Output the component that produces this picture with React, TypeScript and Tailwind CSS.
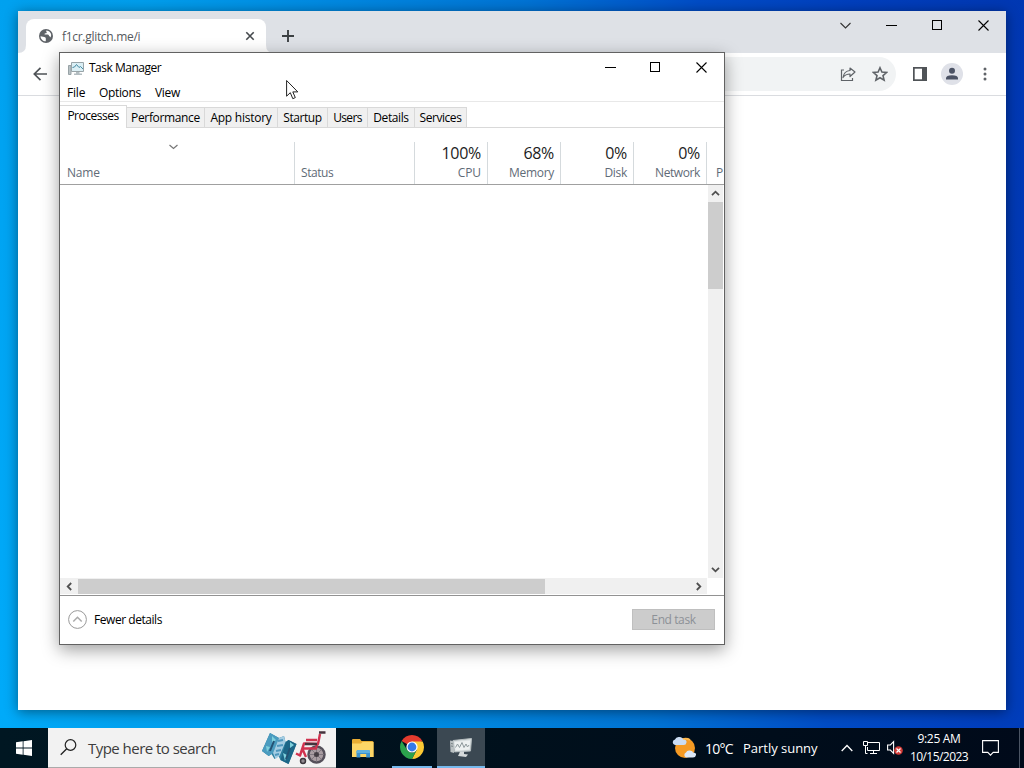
import type { ReactNode } from "react";

// --- Data ---
const tabs = [
  { name: "Performance", width: "w-[78px]", tracking: "tracking-[-0.35px]" },
  { name: "App history", width: "w-[73px]", tracking: "tracking-[-0.25px]" },
  { name: "Startup", width: "w-[50px]", tracking: "tracking-[-0.45px]" },
  { name: "Users", width: "w-[40px]", tracking: "tracking-[-0.65px]" },
  { name: "Details", width: "w-[47px]", tracking: "tracking-[-0.4px]" },
  { name: "Services", width: "w-[52px]", tracking: "tracking-[-0.45px]" },
];

const usage = [
  { name: "CPU", value: "100%", tracking: "tracking-[-0.1px]" },
  { name: "Memory", value: "68%", tracking: "tracking-[-0.3px]" },
  { name: "Disk", value: "0%", tracking: "tracking-[-0.3px]" },
  { name: "Network", value: "0%", tracking: "tracking-[-0.4px]" },
];

// --- Window buttons ---
const MinimizeIcon = () => (
  <svg width="11" height="11" viewBox="0 0 11 11" shapeRendering="crispEdges">
    <path d="M0 5.5h10.500" stroke="#000" />
  </svg>
);

const MaximizeIcon = () => (
  <svg width="11" height="11" viewBox="0 0 11 11" shapeRendering="crispEdges">
    <path d="M.5.5h9v9h-9z" fill="none" stroke="#000" />
  </svg>
);

const CloseIcon = () => (
  <svg width="11" height="11" viewBox="0 0 11 11">
    <path d="M.5.5l10 10M10.500.5l-10 10" stroke="#000" strokeWidth="1.1" />
  </svg>
);

const Chevron = ({ className }: { className?: string }) => (
  <svg width="9" height="9" viewBox="0 0 9 9" className={className}>
    <path d="M1 6.200L4.500 2.700 8 6.200" fill="none" stroke="#505050" strokeWidth="1.8" />
  </svg>
);

// --- Drawings ---
const GlobeIcon = () => (
  <svg width="14" height="14" viewBox="0 0 14 14">
    <circle cx="7" cy="7" r="7" fill="#5f6368" />
    <path
      d="M1.500 7.200l3.800.7c1 .2 1.500.8 1.500 1.700v2.700C3.900 12.200 1.600 10 1.500 7.200zM7.400 1.600c-.4.7-.2 1.300.4 1.700-.1.900-.8 1.100-1.700 1.100-.6 0-.7.7-.4 1.200h3c1 0 1.300.9 1.300 1.700 1 0 1.600.5 1.400 1.500C13 6 12 3.500 9.800 2.200 9 1.800 8.200 1.600 7.400 1.600z"
      fill="#fff"
    />
  </svg>
);

const TaskManagerIcon = () => (
  <svg width="17" height="15" viewBox="0 0 17 15">
    <path d="M.5 4.500h2.500v9H.5z" fill="#b9c2c5" stroke="#98a3a7" />
    <path d="M3.500 1.500h12v9h-12z" fill="#dbeff5" stroke="#99a4a8" />
    <path d="M4.500 6.500l2-.5 2-2.500 2.500 3 1.500-1 2.500 2.500" fill="none" stroke="#478ba3" />
    <path d="M8 11h3.500v1.500H14V14H6v-1.500h2z" fill="#b3bdc1" />
  </svg>
);

const TaskManagerTaskbarIcon = () => (
  <svg width="24" height="22" viewBox="0 0 24 22">
    <path d="M1 4.500l4 .8V17l-3.500-.9z" fill="#b9c0c2" />
    <path d="M2 7.500l2.500.4M2 10l2.500.4" stroke="#798487" />
    <path d="M4 4.500L22.500 2.500 21.500 15l-16 .9z" fill="#d9dfe0" stroke="#b4bcbe" />
    <path d="M5.500 6l15.500-1.500-.5 9-14 1z" fill="#edf1f1" />
    <path d="M6.500 11.500l2-3.500 2 3.500 2.500-5 2 5 2-3.500 1.500 3 1.500-2" fill="none" stroke="#8e999c" />
    <path d="M11 15.500h4V18l4 .5-2 2.500-8-1 1-2z" fill="#d5dadb" />
  </svg>
);

const ChromeIcon = () => (
  <svg width="24" height="24" viewBox="0 0 24 24">
    <path d="M12 12L1.610 6A12 12 0 0 1 22.390 6z" fill="#e33b2e" />
    <path d="M12 6.500h10.650A12 12 0 0 1 12 24l4.800-9.200z" fill="#fcc934" />
    <path d="M1.610 6l5.600 9A5.500 5.500 0 0 0 16.800 14.700L12 24A12 12 0 0 1 1.610 6z" fill="#2ba24c" />
    <circle cx="12" cy="12" r="5.600" fill="#fff" />
    <circle cx="12" cy="12" r="4.400" fill="#3579e8" />
  </svg>
);

const FolderIcon = () => (
  <svg width="22" height="19" viewBox="0 0 22 19">
    <path d="M0 1.200Q0 0 1 0h7l1.500 2H20q1.500 0 1.500 1.200V18H0z" fill="#e9ad33" />
    <path d="M0 4.500h9L10.500 3H21.500v15H0z" fill="#fdd667" />
    <path d="M4.500 18.500v-6Q4.500 11 6 11h10.500Q18 11 18 12.500v6h-3.800V15H8.300v3.500z" fill="#3d93cf" />
    <path d="M4.500 12.500Q4.500 11 6 11h10.500Q18 11 18 12.500V14H4.500z" fill="#60b0df" />
  </svg>
);

const SearchArt = () => (
  <svg width="66" height="36" viewBox="0 0 66 36">
    <path d="M8 3l9 5 5-2 1.500 6 3-2 8 4-8 20-8-4-2-4-4 3-3-5-3 2-6.500-5z" fill="#2d7f9f" />
    <path d="M8 3l9 5-6 15-4 3-7-5z" fill="#4b9cc0" />
    <path d="M17 8l5-2 1.500 6-6 14-4 3-2.500-6z" fill="#a5cde3" />
    <path d="M24 12l2.500-2 8 4-8 20-8-4z" fill="#1c6687" />
    <path d="M10 6l4 4-4 3zM4 16l4 1-3 5zM28 12l4 3-4 3zM21 23l4 2-2 6z" fill="#7fd0dc" />
    <path d="M12 11L8 21M28 18l-4 11" stroke="#245273" strokeWidth="2" />
    <path d="M16 11l5-1M15 16l6-1M14 21l5-1M13 25l4-1" stroke="#4f97bd" strokeWidth="2" />
    <circle cx="54.500" cy="24.500" r="8" fill="#a99da2" stroke="#55505a" strokeWidth="2.500" />
    <path d="M54.500 17v15M47 24.500h15M49.200 19.200l10.600 10.600M59.800 19.200L49.200 29.800" stroke="#777078" strokeWidth=".8" />
    <circle cx="54.500" cy="24.500" r="2.500" fill="#443e44" />
    <path d="M58 4l-2 10-14-.5-4 12-4-2M55 14l-1 4.500H41M44 10h11M40 18l4 9" fill="none" stroke="#d0334f" strokeWidth="2.400" strokeLinejoin="round" />
    <path d="M57 2.500h6.500M43 14h12" stroke="#45333d" strokeWidth="2.500" />
    <circle cx="41" cy="31" r="2.500" fill="#918b91" stroke="#3d383e" strokeWidth="1.500" />
  </svg>
);

const WeatherIcon = () => (
  <svg width="26" height="24" viewBox="0 0 26 24">
    <circle cx="13" cy="12" r="10" fill="#f59a23" />
    <path d="M5 9a9 9 0 0 1 13-5" fill="none" stroke="#ffb94d" strokeWidth="2" />
    <path d="M3 9a2.800 2.800 0 0 1 0-5.500Q4 .5 7.500 1T11 3.500q4 0 3.500 3T11 9z" fill="#cbdcf2" />
    <path d="M14 21.500a2.700 2.700 0 0 1 0-5q1-2.500 4-2t3 2q3.500 0 3 2.500t-3 2.500z" fill="#dce8f8" />
  </svg>
);

const Cursor = () => (
  <svg width="13" height="21" viewBox="0 0 13 21" className="absolute left-[286px] top-[79px]">
    <path d="M.6 1.500v15.700l3.700-3.500 2.500 6 2.500-1.100-2.500-5.700h5z" fill="#fff" stroke="#222" />
  </svg>
);

const IconCell = ({ children, className }: { children: ReactNode; className: string }) => (
  <div className={`flex shrink-0 items-center justify-center ${className}`}>{children}</div>
);

// --- Browser window ---
const BrowserWindow = () => (
  <div className="absolute left-[18px] top-[11px] flex h-[699px] w-[988px] flex-col bg-white shadow-[0_2px_12px_rgba(0,0,0,0.45)]">
    <div className="flex h-[42px] shrink-0 items-end bg-[#dee1e6]">
      <svg width="8" height="8" viewBox="0 0 8 8" className="shrink-0">
        <path d="M0 8h8V0q0 8-8 8z" fill="#fff" />
      </svg>
      <div className="flex h-[34px] w-[240px] shrink-0 items-center rounded-t-lg bg-white pl-[13px] pr-[11px] text-[12px] text-[#55595d]">
        <GlobeIcon />
        <span className="ml-[9px] flex-1 pt-px tracking-[-0.3px]">f1cr.glitch.me/i</span>
        <svg width="10" height="10" viewBox="0 0 10 10">
          <path d="M1.300 1.300l7.400 7.400M8.700 1.300L1.300 8.700" stroke="#45494d" strokeWidth="1.600" />
        </svg>
      </div>
      <svg width="8" height="8" viewBox="0 0 8 8" className="shrink-0">
        <path d="M8 8H0V0q0 8 8 8z" fill="#fff" />
      </svg>
      <svg width="12" height="12" viewBox="0 0 12 12" className="mb-[11px] ml-2">
        <path d="M6 0v12M0 6h12" stroke="#3c4043" strokeWidth="1.900" />
      </svg>
      <div className="ml-auto flex h-[42px] items-start pt-[9px]">
        <IconCell className="h-[11px] w-[46px]">
          <svg width="11" height="11" viewBox="0 0 11 11">
            <path d="M.5 3L5.500 8l5-5" fill="none" stroke="#333" strokeWidth="1.100" />
          </svg>
        </IconCell>
        <IconCell className="h-[11px] w-[46px] pl-px"><MinimizeIcon /></IconCell>
        <IconCell className="h-[11px] w-[46px] pl-px"><MaximizeIcon /></IconCell>
        <IconCell className="h-[11px] w-[46px] pl-px"><CloseIcon /></IconCell>
      </div>
    </div>

    <div className="flex h-[43px] shrink-0 items-center border-b border-[#dadce0] pl-[15px] pr-[19px]">
      <svg width="14" height="14" viewBox="0 0 14 14">
        <path d="M14 7H1.500M7.500.8L1.300 7l6.200 6.200" fill="none" stroke="#4f5357" strokeWidth="1.700" />
      </svg>
      <div className="ml-4 flex h-[34px] flex-1 items-center justify-end gap-4 rounded-full bg-[#f1f3f4] pr-2">
        <svg width="16" height="16" viewBox="0 0 16 16" fill="none" stroke="#5f6368" strokeWidth="1.200">
          <path d="M4 4H1.500v10.500h11V12" />
          <path d="M10 2l5 4-5 4.500V8q-4.500 0-7 3.500Q4 5 10 4.500z" strokeLinejoin="round" />
        </svg>
        <svg width="16" height="16" viewBox="0 0 16 16">
          <path d="M8 1.800l1.900 4.300 4.700.4-3.600 3.100 1.100 4.600L8 11.800l-4.100 2.400L5 9.600 1.400 6.500l4.700-.4z" fill="none" stroke="#5f6368" strokeWidth="1.600" />
        </svg>
      </div>
      <svg width="14" height="14" viewBox="0 0 14 14" className="ml-[17px]">
        <path d="M0 0h14v14H0z" fill="#4f5357" />
        <path d="M1.700 1.700H9v10.600H1.700z" fill="#fff" />
      </svg>
      <svg width="22" height="22" viewBox="0 0 22 22" className="ml-[14px]">
        <circle cx="11" cy="11" r="11" fill="#dfe1e8" />
        <circle cx="11" cy="7.800" r="3" fill="#4b5264" />
        <path d="M5 16.500v-1.300q0-3 6-3t6 3v1.300z" fill="#4b5264" />
      </svg>
      <svg width="4" height="14" viewBox="0 0 4 14" className="ml-5">
        <circle cx="2" cy="2" r="1.500" fill="#5f6368" />
        <circle cx="2" cy="7" r="1.500" fill="#5f6368" />
        <circle cx="2" cy="12" r="1.500" fill="#5f6368" />
      </svg>
    </div>
  </div>
);

// --- Task Manager window ---
const TaskManagerWindow = () => (
  <div className="absolute left-[59px] top-[52px] flex h-[593px] w-[666px] flex-col border border-[#626262] bg-white text-[12px] text-black shadow-[0_5px_16px_rgba(0,0,0,0.38)]">
    <div className="flex h-[30px] shrink-0 items-center pl-2">
      <TaskManagerIcon />
      <span className="ml-1 flex-1 tracking-[-0.5px]">Task Manager</span>
      <div className="flex items-center pb-px">
        <IconCell className="w-[45px]"><MinimizeIcon /></IconCell>
        <IconCell className="w-[45px]"><MaximizeIcon /></IconCell>
        <IconCell className="w-[46px] pl-px"><CloseIcon /></IconCell>
      </div>
    </div>

    <div className="flex h-[19px] shrink-0 items-end border-b border-[#e8e8e8] pl-[7px] leading-[16px]">
      <span className="w-8 tracking-[-0.2px]">File</span>
      <span className="w-14 tracking-[-0.35px]">Options</span>
      <span className="tracking-[-0.3px]">View</span>
    </div>

    <div className="flex h-[26px] shrink-0 items-end">
      <div className="flex h-[23px] w-[67px] justify-center border-r border-t border-[#d9d9d9] pt-px">
        <span className="tracking-[-0.5px]">Processes</span>
      </div>
      {tabs.map((tab) => (
        <div
          key={tab.name}
          className={`flex h-[21px] items-center justify-center border-b border-r border-t border-[#d9d9d9] bg-[#f0f0f0] pt-px ${tab.width}`}
        >
          <span className={`whitespace-nowrap ${tab.tracking}`}>{tab.name}</span>
        </div>
      ))}
      <div className="flex-1 self-stretch border-b border-[#d9d9d9]" />
    </div>

    <div className="flex h-[57px] shrink-0 items-end overflow-hidden border-b border-[#a0a0a0] text-[#5f6b77]">
      <div className="flex h-[42px] w-[235px] shrink-0 flex-col justify-between border-r border-[#d5dadd] pb-[2px] pl-[7px]">
        <svg width="9" height="6" viewBox="0 0 9 6" className="ml-[102px] mt-[2px]">
          <path d="M.5 1l4 3.500 4-3.500" fill="none" stroke="#777" strokeWidth="1.200" />
        </svg>
        <span className="tracking-[-0.2px]">Name</span>
      </div>
      <div className="flex h-[42px] w-[120px] shrink-0 items-end border-r border-[#d5dadd] pb-[2px] pl-[6px]">
        <span className="tracking-[-0.45px]">Status</span>
      </div>
      {usage.map((col) => (
        <div
          key={col.name}
          className="flex h-[42px] w-[73px] shrink-0 flex-col items-end justify-end border-r border-[#d5dadd] pb-[2px] pr-[6px]"
        >
          <span className="text-[16px] leading-[22px] tracking-[-0.3px] text-[#1c1c1c]">{col.value}</span>
          <span className={`leading-[18px] ${col.tracking}`}>{col.name}</span>
        </div>
      ))}
      <span className="pb-[2px] pl-[9px]">P</span>
    </div>

    <div className="flex flex-1">
      <div className="flex flex-1 flex-col justify-end">
        <div className="mb-px flex h-[16px] w-full items-center bg-[#f0f0f0]">
          <IconCell className="w-[18px]"><Chevron className="-rotate-90" /></IconCell>
          <div className="h-[15px] w-[467px] bg-[#cdcdcd]" />
          <IconCell className="ml-auto w-[17px]"><Chevron className="rotate-90" /></IconCell>
        </div>
      </div>
      <div className="mb-[17px] ml-px mr-px flex w-[15px] flex-col items-center bg-[#f0f0f0]">
        <IconCell className="h-[17px]"><Chevron /></IconCell>
        <div className="h-[87px] w-full bg-[#cdcdcd]" />
        <IconCell className="mt-auto h-[17px]"><Chevron className="rotate-180" /></IconCell>
      </div>
    </div>

    <div className="flex h-[49px] shrink-0 items-center border-t border-[#929292] pb-px pl-2 pr-[9px]">
      <svg width="19" height="19" viewBox="0 0 19 19">
        <circle cx="9.500" cy="9.500" r="8.900" fill="none" stroke="#999" />
        <path d="M5.300 11.500l4.200-4.300 4.200 4.300" fill="none" stroke="#aaa" strokeWidth="1.500" />
      </svg>
      <span className="ml-[7px] pt-px tracking-[-0.45px]">Fewer details</span>
      <button className="ml-auto h-[21px] w-[83px] border border-[#bfbfbf] bg-[#cccccc] tracking-[-0.4px] text-[#8c9197]">
        End task
      </button>
    </div>
  </div>
);

// --- Taskbar ---
const Taskbar = () => (
  <div className="absolute bottom-0 left-0 flex h-10 w-full items-center bg-gradient-to-r from-[#001722] via-[#00101c] to-[#000a1a] text-white">
    <IconCell className="h-10 w-12">
      <svg width="16" height="16" viewBox="0 0 16 16" fill="#fff">
        <path d="M0 2.200L6.700 1.300v6.200H0zM7.500 1.200L16 0v7.500H7.500zM0 8.400h6.700v6.300L0 13.800zM7.500 8.400H16V16l-8.500-1.200z" />
      </svg>
    </IconCell>
    <div className="flex h-10 w-[288px] shrink-0 items-center border-b border-[#aaa] bg-[#f2f2f2] pl-3 pr-2 text-[#3d3d3d]">
      <svg width="17" height="17" viewBox="0 0 17 17">
        <circle cx="10.500" cy="6" r="5.300" fill="none" stroke="#222" strokeWidth="1.200" />
        <path d="M6.700 9.800L.7 15.800" stroke="#222" strokeWidth="1.300" />
      </svg>
      <span className="ml-[11px] flex-1 whitespace-nowrap pt-[2px] text-[15px] tracking-[-0.53px]">Type here to search</span>
      <SearchArt />
    </div>
    <IconCell className="ml-[2px] h-10 w-[50px]"><FolderIcon /></IconCell>
    <IconCell className="ml-1 h-10 w-10 border-b-2 border-[#76b9ed]"><ChromeIcon /></IconCell>
    <IconCell className="ml-[5px] h-10 w-12 border-b-2 border-[#76b9ed] bg-[#3b4852]"><TaskManagerTaskbarIcon /></IconCell>

    <div className="ml-auto flex h-full items-center">
      <WeatherIcon />
      <span className="ml-[7px] w-[38px] whitespace-nowrap pt-px text-[14px] tracking-[-0.75px]">10°C</span>
      <span className="w-[98px] whitespace-nowrap pt-px text-[13px] tracking-[-0.02px]">Partly sunny</span>
      <svg width="12" height="8" viewBox="0 0 12 8">
        <path d="M.7 7L6 1.500 11.300 7" fill="none" stroke="#fff" strokeWidth="1.300" />
      </svg>
      <svg width="17" height="14" viewBox="0 0 17 14" fill="none" stroke="#fff" className="ml-[10px]">
        <path d="M5 1.500h11.500v8H4.500V6M10.500 9.500v3M7 12.500h7M.5.5h4v4h-4zM2.500 4.500v8h2" />
      </svg>
      <svg width="17" height="16" viewBox="0 0 17 16" className="ml-[7px] mr-[5px]">
        <path d="M.6 5h2.800l3.200-3.300v11.600L3.400 10H.6z" fill="none" stroke="#fff" strokeWidth="1.100" />
        <circle cx="11.500" cy="10.500" r="4.300" fill="#d33b37" />
        <path d="M9.500 8.500l4 4M13.500 8.500l-4 4" stroke="#fff" strokeWidth="1.200" />
      </svg>
      <div className="flex w-[60px] flex-col items-center whitespace-nowrap text-[12px] leading-[18px]">
        <span className="tracking-[-0.3px]">9:25 AM</span>
        <span className="tracking-[-0.55px]">10/15/2023</span>
      </div>
      <svg width="17" height="16" viewBox="0 0 17 16" className="ml-[13px] mr-5">
        <path d="M.6.6h15.800v11.800h-5.200l-2.700 2.700-2.700-2.700H.6z" fill="none" stroke="#fff" strokeWidth="1.100" />
      </svg>
      <div className="h-full w-[5px] border-l border-[#4b5564]" />
    </div>
  </div>
);

const App = () => (
  <div className="relative h-[768px] w-[1024px] overflow-hidden bg-[linear-gradient(80deg,#00abfa_0%,#00a1ef_12%,#009eec_24%,#0089e1_40%,#0073d4_57%,#004cc6_72%,#003fbd_85%,#0037b2_100%)] font-['Open_Sans','Noto_Sans',sans-serif]">
    <BrowserWindow />
    <TaskManagerWindow />
    <Cursor />
    <Taskbar />
  </div>
);

export default App;
